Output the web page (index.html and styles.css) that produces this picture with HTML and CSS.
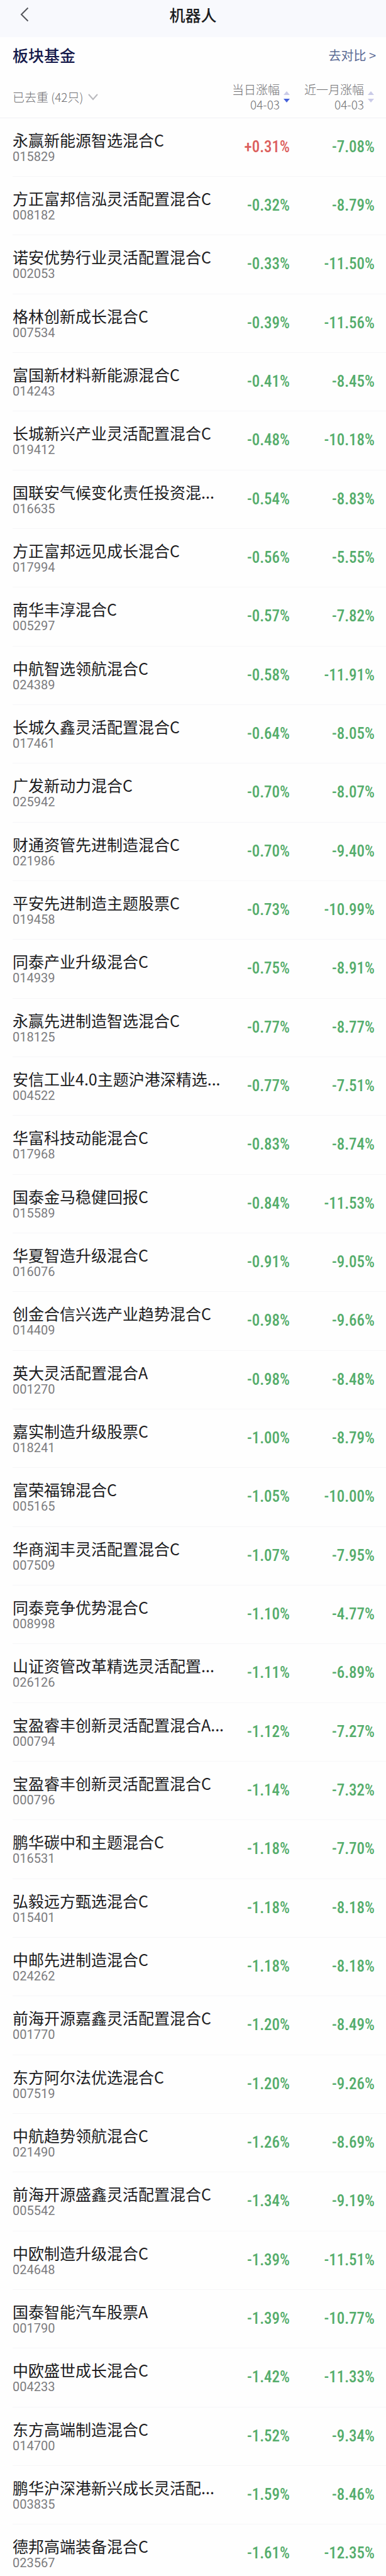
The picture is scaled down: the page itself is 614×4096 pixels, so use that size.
FILE: index.html
```html
<!DOCTYPE html>
<html lang="zh-CN">
<head>
    <meta charset="UTF-8">
    <title>机器人</title>
    <meta name="viewport" content="width=device-width, initial-scale=1.0">
    <link rel="stylesheet" href="styles.css">
</head>
<body>
    <header class="topbar">
        <button class="back" type="button" aria-label="返回">
            <svg width="14" height="24" viewBox="0 0 14 24"><path d="M12.5 1.5 L2 12 L12.5 22.5"/></svg>
        </button>
        <h1>机器人</h1>
    </header>
    <main>
        <div class="section-head">
            <h2>板块基金</h2>
            <a class="compare" href="#compare">去对比 &gt;</a>
        </div>
        <table class="funds">
            <thead>
                <tr>
                    <th class="col-name">
                        <button class="filter" type="button">已去重 (42只)
                            <svg width="18" height="12" viewBox="0 0 18 12"><path d="M2 2 L9 10 L16 2"/></svg>
                        </button>
                    </th>
                    <th class="col-day">
                        <button class="sort" type="button">
                            <span>当日涨幅<br>04-03</span>
                            <svg class="desc" width="10" height="18" viewBox="0 0 10 18"><path d="M5 0 L10 6 H0 Z"/><path class="down" d="M0 12 H10 L5 18 Z"/></svg>
                        </button>
                    </th>
                    <th class="col-month">
                        <button class="sort" type="button">
                            <span>近一月涨幅<br>04-03</span>
                            <svg width="10" height="18" viewBox="0 0 10 18"><path d="M5 0 L10 6 H0 Z"/><path class="down" d="M0 12 H10 L5 18 Z"/></svg>
                        </button>
                    </th>
                </tr>
            </thead>
            <tbody>
                <tr><td><div class="name">永赢新能源智选混合C</div><div class="code">015829</div></td><td class="up">+0.31%</td><td>-7.08%</td></tr>
                <tr><td><div class="name">方正富邦信泓灵活配置混合C</div><div class="code">008182</div></td><td>-0.32%</td><td>-8.79%</td></tr>
                <tr><td><div class="name">诺安优势行业灵活配置混合C</div><div class="code">002053</div></td><td>-0.33%</td><td>-11.50%</td></tr>
                <tr><td><div class="name">格林创新成长混合C</div><div class="code">007534</div></td><td>-0.39%</td><td>-11.56%</td></tr>
                <tr><td><div class="name">富国新材料新能源混合C</div><div class="code">014243</div></td><td>-0.41%</td><td>-8.45%</td></tr>
                <tr><td><div class="name">长城新兴产业灵活配置混合C</div><div class="code">019412</div></td><td>-0.48%</td><td>-10.18%</td></tr>
                <tr><td><div class="name">国联安气候变化责任投资混...</div><div class="code">016635</div></td><td>-0.54%</td><td>-8.83%</td></tr>
                <tr><td><div class="name">方正富邦远见成长混合C</div><div class="code">017994</div></td><td>-0.56%</td><td>-5.55%</td></tr>
                <tr><td><div class="name">南华丰淳混合C</div><div class="code">005297</div></td><td>-0.57%</td><td>-7.82%</td></tr>
                <tr><td><div class="name">中航智选领航混合C</div><div class="code">024389</div></td><td>-0.58%</td><td>-11.91%</td></tr>
                <tr><td><div class="name">长城久鑫灵活配置混合C</div><div class="code">017461</div></td><td>-0.64%</td><td>-8.05%</td></tr>
                <tr><td><div class="name">广发新动力混合C</div><div class="code">025942</div></td><td>-0.70%</td><td>-8.07%</td></tr>
                <tr><td><div class="name">财通资管先进制造混合C</div><div class="code">021986</div></td><td>-0.70%</td><td>-9.40%</td></tr>
                <tr><td><div class="name">平安先进制造主题股票C</div><div class="code">019458</div></td><td>-0.73%</td><td>-10.99%</td></tr>
                <tr><td><div class="name">同泰产业升级混合C</div><div class="code">014939</div></td><td>-0.75%</td><td>-8.91%</td></tr>
                <tr><td><div class="name">永赢先进制造智选混合C</div><div class="code">018125</div></td><td>-0.77%</td><td>-8.77%</td></tr>
                <tr><td><div class="name">安信工业4.0主题沪港深精选...</div><div class="code">004522</div></td><td>-0.77%</td><td>-7.51%</td></tr>
                <tr><td><div class="name">华富科技动能混合C</div><div class="code">017968</div></td><td>-0.83%</td><td>-8.74%</td></tr>
                <tr><td><div class="name">国泰金马稳健回报C</div><div class="code">015589</div></td><td>-0.84%</td><td>-11.53%</td></tr>
                <tr><td><div class="name">华夏智造升级混合C</div><div class="code">016076</div></td><td>-0.91%</td><td>-9.05%</td></tr>
                <tr><td><div class="name">创金合信兴选产业趋势混合C</div><div class="code">014409</div></td><td>-0.98%</td><td>-9.66%</td></tr>
                <tr><td><div class="name">英大灵活配置混合A</div><div class="code">001270</div></td><td>-0.98%</td><td>-8.48%</td></tr>
                <tr><td><div class="name">嘉实制造升级股票C</div><div class="code">018241</div></td><td>-1.00%</td><td>-8.79%</td></tr>
                <tr><td><div class="name">富荣福锦混合C</div><div class="code">005165</div></td><td>-1.05%</td><td>-10.00%</td></tr>
                <tr><td><div class="name">华商润丰灵活配置混合C</div><div class="code">007509</div></td><td>-1.07%</td><td>-7.95%</td></tr>
                <tr><td><div class="name">同泰竞争优势混合C</div><div class="code">008998</div></td><td>-1.10%</td><td>-4.77%</td></tr>
                <tr><td><div class="name">山证资管改革精选灵活配置...</div><div class="code">026126</div></td><td>-1.11%</td><td>-6.89%</td></tr>
                <tr><td><div class="name">宝盈睿丰创新灵活配置混合A...</div><div class="code">000794</div></td><td>-1.12%</td><td>-7.27%</td></tr>
                <tr><td><div class="name">宝盈睿丰创新灵活配置混合C</div><div class="code">000796</div></td><td>-1.14%</td><td>-7.32%</td></tr>
                <tr><td><div class="name">鹏华碳中和主题混合C</div><div class="code">016531</div></td><td>-1.18%</td><td>-7.70%</td></tr>
                <tr><td><div class="name">弘毅远方甄选混合C</div><div class="code">015401</div></td><td>-1.18%</td><td>-8.18%</td></tr>
                <tr><td><div class="name">中邮先进制造混合C</div><div class="code">024262</div></td><td>-1.18%</td><td>-8.18%</td></tr>
                <tr><td><div class="name">前海开源嘉鑫灵活配置混合C</div><div class="code">001770</div></td><td>-1.20%</td><td>-8.49%</td></tr>
                <tr><td><div class="name">东方阿尔法优选混合C</div><div class="code">007519</div></td><td>-1.20%</td><td>-9.26%</td></tr>
                <tr><td><div class="name">中航趋势领航混合C</div><div class="code">021490</div></td><td>-1.26%</td><td>-8.69%</td></tr>
                <tr><td><div class="name">前海开源盛鑫灵活配置混合C</div><div class="code">005542</div></td><td>-1.34%</td><td>-9.19%</td></tr>
                <tr><td><div class="name">中欧制造升级混合C</div><div class="code">024648</div></td><td>-1.39%</td><td>-11.51%</td></tr>
                <tr><td><div class="name">国泰智能汽车股票A</div><div class="code">001790</div></td><td>-1.39%</td><td>-10.77%</td></tr>
                <tr><td><div class="name">中欧盛世成长混合C</div><div class="code">004233</div></td><td>-1.42%</td><td>-11.33%</td></tr>
                <tr><td><div class="name">东方高端制造混合C</div><div class="code">014700</div></td><td>-1.52%</td><td>-9.34%</td></tr>
                <tr><td><div class="name">鹏华沪深港新兴成长灵活配...</div><div class="code">003835</div></td><td>-1.59%</td><td>-8.46%</td></tr>
                <tr><td><div class="name">德邦高端装备混合C</div><div class="code">023567</div></td><td>-1.61%</td><td>-12.35%</td></tr>
            </tbody>
        </table>
    </main>
</body>
</html>
```

FILE: styles.css
```css
body {
    margin: 0;
    background-color: #fefefe;
    color: #1c1c1e;
    font-family: "Noto Sans CJK SC", sans-serif;
}
button {
    padding: 0;
    border: 0;
    background: none;
    color: inherit;
    font: inherit;
    cursor: pointer;
}
svg {
    display: block;
    fill: none;
}
h1, h2 {
    margin: 0;
    font-weight: 500;
}

.topbar {
    display: grid;
    grid-template-columns: 60px 1fr 60px;
    align-items: center;
    height: 46px;
    padding-bottom: 13px;
    background-color: #f8f9fd;
}
.back {
    justify-self: end;
    padding-right: 14px;
}
.back svg {
    stroke: #55565c;
    stroke-width: 2;
}
.topbar h1 {
    font-size: 25px;
    line-height: 36px;
    text-align: center;
}

.section-head {
    display: flex;
    justify-content: space-between;
    align-items: center;
    height: 56px;
    padding: 0 16px 0 20px;
}
.section-head h2 {
    color: #15194a;
    font-size: 25px;
    line-height: 36px;
}
.compare {
    color: #5b6a94;
    font-size: 20px;
    text-decoration: none;
}

.funds {
    width: 100%;
    table-layout: fixed;
    border-collapse: collapse;
}
.funds th {
    height: 66px;
    padding: 6px 0 0;
    border-bottom: 1px solid #f1f1f4;
    color: #6f6f72;
    font-size: 19px;
    font-weight: 300;
    line-height: 24px;
    text-align: right;
}
.funds .col-name {
    padding-left: 20px;
    text-align: left;
}
.col-day {
    width: 96px;
}
.col-month {
    width: 134px;
}
.funds .col-month {
    padding-right: 19px;
}
.filter, .sort {
    display: inline-flex;
    align-items: center;
    gap: 6px;
    text-align: inherit;
    white-space: nowrap;
}
.filter svg {
    stroke: #b9b9bd;
    stroke-width: 2;
}
.sort svg {
    fill: #cacbe8;
}
.sort .desc .down {
    fill: #4662da;
}

/* row lines start at the text, not at the screen edge */
.funds td {
    box-sizing: border-box;
    height: 93px;
    padding: 32px 0 0;
    background: linear-gradient(#f6f6f8, #f6f6f8) 0 100% / 100% 1px no-repeat;
    color: #55ad6c;
    font-family: "Roboto Condensed", "Liberation Sans Narrow", Roboto, sans-serif;
    font-size: 25px;
    font-weight: 500;
    line-height: 28px;
    text-align: right;
    vertical-align: top;
    white-space: nowrap;
}
.funds tr:nth-child(3n) td {
    height: 94px;
}
.funds tr:last-child td {
    height: 82px;
    background: none;
}
.funds td:first-child {
    padding: 20px 0 0 20px;
    background-position: 20px 100%;
    text-align: left;
}
.funds td:last-child {
    padding-right: 18px;
}
.funds .up {
    color: #dc5f5d;
}
.name {
    color: #1c1c1e;
    font-family: "Noto Sans CJK SC", sans-serif;
    font-size: 25px;
    font-weight: 400;
    line-height: 28px;
}
.code {
    color: #7c7c7f;
    font-family: Roboto, sans-serif;
    font-size: 20px;
    font-weight: 400;
    line-height: 26px;
}
```
